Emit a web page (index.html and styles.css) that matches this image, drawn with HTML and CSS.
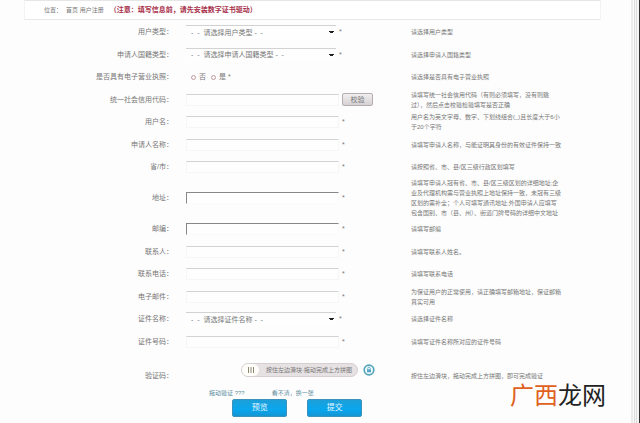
FILE: index.html
```
<!DOCTYPE html>
<html lang="zh-CN">
<head>
  <meta charset="UTF-8">
  <title>用户注册</title>
  <link rel="stylesheet" href="styles.css">
</head>
<body>

  <!-- Breadcrumb -->
  <header class="location">
    <span>位置：</span>
    <nav><a href="#home">首页</a> <a href="#register">用户注册</a></nav>
    <strong>（注意：填写信息前，请先安装数字证书驱动）</strong>
  </header>

  <!-- Registration form -->
  <form id="register">
    <div class="row">
      <label for="userType">用户类型：</label>
      <div class="field">
        <select id="userType"><option>-&nbsp; -&nbsp; 请选择用户类型&nbsp;-&nbsp; -</option></select><i>*</i>
      </div>
      <p>请选择用户类型</p>
    </div>
    <div class="row tall">
      <label for="nationType">申请人国籍类型：</label>
      <div class="field">
        <select id="nationType"><option>-&nbsp; -&nbsp; 请选择申请人国籍类型&nbsp;-&nbsp; -</option></select><i>*</i>
      </div>
      <p>请选择申请人国籍类型</p>
    </div>
    <div class="row">
      <span class="label" id="licenseLabel">是否具有电子营业执照：</span>
      <div class="field radios" role="radiogroup" aria-labelledby="licenseLabel">
        <input type="radio" name="license" id="licenseNo"><label for="licenseNo">否</label>
        <input type="radio" name="license" id="licenseYes"><label for="licenseYes">是</label><i>*</i>
      </div>
      <p>请选择是否具有电子营业执照</p>
    </div>
    <div class="row tall">
      <label for="creditCode">统一社会信用代码：</label>
      <div class="field">
        <input type="text" id="creditCode"><button type="button" class="check">校验</button>
      </div>
      <p>请填写统一社会信用代码（有则必须填写，没有则跳<br>过），然后点击校验检验填写是否正确</p>
    </div>
    <div class="row">
      <label for="userName">用户名：</label>
      <div class="field"><input type="text" id="userName"><i>*</i></div>
      <p>用户名为英文字母、数字、下划线组合(_)且长度大于6小<br>于20个字符</p>
    </div>
    <div class="row tall">
      <label for="applicant">申请人名称：</label>
      <div class="field"><input type="text" id="applicant"><i>*</i></div>
      <p>请填写申请人名称，与能证明其身份的有效证件保持一致</p>
    </div>
    <div class="row">
      <label for="province">省/市：</label>
      <div class="field"><input type="text" id="province"><i>*</i></div>
      <p>请按照省、市、县/区三级行政区划填写</p>
    </div>
    <div class="row">
      <label for="address">地址：</label>
      <div class="field"><input type="text" id="address" class="inset"><i>*</i></div>
      <p>请填写申请人冠有省、市、县/区三级区划的详细地址;企<br>业及代理机构需与营业执照上地址保持一致，未冠有三级<br>区划的需补全；个人可填写通讯地址;外国申请人应填写<br>包含国别、市（县、州）、街道门牌号码的详细中文地址</p>
    </div>
    <div class="row">
      <label for="postcode">邮编：</label>
      <div class="field"><input type="text" id="postcode" class="inset"><i>*</i></div>
      <p>请填写邮编</p>
    </div>
    <div class="row tall">
      <label for="contact">联系人：</label>
      <div class="field"><input type="text" id="contact"><i>*</i></div>
      <p>请填写联系人姓名。</p>
    </div>
    <div class="row">
      <label for="phone">联系电话：</label>
      <div class="field"><input type="text" id="phone"><i>*</i></div>
      <p>请填写联系电话</p>
    </div>
    <div class="row tall">
      <label for="email">电子邮件：</label>
      <div class="field"><input type="text" id="email"><i>*</i></div>
      <p>为保证用户的正常使用，请正确填写邮箱地址，保证邮箱<br>真实可用</p>
    </div>
    <div class="row">
      <label for="certName">证件名称：</label>
      <div class="field">
        <select id="certName"><option>-&nbsp; -&nbsp; 请选择证件名称&nbsp;-&nbsp; -</option></select><i>*</i>
      </div>
      <p>请选择证件名称</p>
    </div>
    <div class="row tall">
      <label for="certNo">证件号码：</label>
      <div class="field"><input type="text" id="certNo"><i>*</i></div>
      <p>请填写证件名称所对应的证件号码</p>
    </div>

    <!-- Slide captcha -->
    <div class="row">
      <span class="label">验证码：</span>
      <div class="captcha">
        <div class="slider">
          <div class="track">
            <button type="button" class="knob" aria-label="滑块">
              <svg width="8" height="8" viewBox="0 0 8 8"><path d="M1.5 1v6M4 1v6M6.5 1v6" stroke="#8a8a70" fill="none"/></svg>
            </button>
            <span>按住左边滑块·拖动完成上方拼图</span>
          </div>
          <svg class="lock" width="12" height="12" viewBox="0 0 12 12">
            <circle cx="6" cy="6" r="4.8" fill="#f2fbfd" stroke="#55a5b8" stroke-width="1.7"/>
            <path d="M4.7 5.5V4.4a1.3 1.3 0 0 1 2.6 0v1.1" fill="none" stroke="#55a5c4" stroke-width=".8"/>
            <rect x="4" y="5.3" width="4" height="3" fill="#55a5c4"/>
          </svg>
        </div>
        <div class="links"><a href="#drag">拖动验证 ???</a><a href="#change">看不清，换一张</a></div>
      </div>
      <p>按住左边滑块，拖动完成上方拼图，即可完成验证</p>
    </div>

    <div class="actions">
      <button type="button">预览</button>
      <button type="submit">提交</button>
    </div>
  </form>

  <div class="site-mark"><span>广西</span>龙网</div>

</body>
</html>
```

FILE: styles.css
```
* {
  box-sizing: border-box;
}
body {
  margin: 0;
  min-height: 100vh;
  padding-right: 12px;
  font: 7px/10px "Liberation Sans", "Noto Sans CJK SC", sans-serif;
  color: #777;
  background: linear-gradient(to right, #fdfdfd 0 3px, #ececec 3px 5px, #fafafa 5px 6px, #dedede 6px 7px, #f5f5f5 7px 8px, #ddd 8px 9px, #f4f4f4 9px 11px, #333 11px) right / 12px 100% no-repeat #fdfdfd;
}
input, select, button {
  font: inherit;
  color: inherit;
}
a {
  color: inherit;
  text-decoration: none;
}
.location {
  display: flex;
  align-items: center;
  height: 20px;
  margin: 0 27px 1px 24px;
  padding-left: 19px;
  font-size: 6px;
  border: 1px solid #f3f3f3;
  border-top-color: #e6e6e6;
  border-bottom-color: #e8e8e8;
  background: #fff;
}
.location nav {
  margin-left: 4px;
}
.location strong {
  margin-left: 6px;
  font-size: 7px;
  color: #a8304a;
}
.row {
  display: grid;
  grid-template-columns: 173fr 238fr 217fr;
  align-items: center;
  min-height: 22px;
}
.row.tall {
  min-height: 23px;
}
.row > label, .label {
  text-align: right;
}
.row p {
  margin: 0;
  font-size: 6px;
  white-space: nowrap;
}
.field {
  display: flex;
  align-items: center;
  padding-left: 13px;
}
.field i {
  margin-left: 3px;
  font-style: normal;
}
input[type="text"] {
  width: 153px;
  height: 12px;
  padding: 0 4px;
  border: 1px solid #f6f6f6;
  border-top-color: #d2d2d2;
  background: #fefefe;
}
input.inset {
  border-color: #888 #fafafa #fafafa #888;
}
select {
  width: 150px;
  height: 14px;
  padding: 0 5px;
  appearance: none;
  border: 0;
  border-top: 1px solid #d2d2d2;
  border-radius: 0;
  background: linear-gradient(#222, #222) right 2px top 5px / 5px 1px no-repeat, linear-gradient(#222, #222) right 3px top 6px / 3px 1px no-repeat, #fefefe;
}
.radios input {
  appearance: none;
  width: 5px;
  height: 5px;
  margin: 0 3px 0 5px;
  border: 1px solid #c09a9f;
  border-radius: 50%;
}
.radios i {
  margin-left: 2px;
}
.check {
  width: 31px;
  height: 13px;
  margin-left: 3px;
  padding: 0;
  border: 1px solid #b5adb1;
  border-radius: 2px;
  background: linear-gradient(#f2eff0, #d6d1d4);
}
.captcha {
  padding: 10px 0 1px 36px;
}
.slider {
  display: flex;
  align-items: center;
  gap: 5px;
  margin-left: 32px;
}
.track {
  display: flex;
  align-items: center;
  width: 117px;
  height: 14px;
  border: 1px solid #d6cfd0;
  border-radius: 7px;
  background: #e6e1e2;
  font-size: 6px;
  white-space: nowrap;
}
.knob {
  display: flex;
  align-items: center;
  justify-content: center;
  width: 17px;
  height: 12px;
  margin-right: 7px;
  padding: 0;
  border: 0;
  border-radius: 7px;
  background: #fffefa;
}
.links {
  display: flex;
  gap: 27px;
  margin-top: 11px;
  font-size: 6px;
  color: #5f8e9f;
}
.actions {
  display: flex;
  gap: 20px;
  padding-left: 37%;
}
.actions button {
  width: 55px;
  height: 18px;
  padding: 0;
  border: 1px solid #3a92bd;
  border-radius: 2px;
  font-size: 8px;
  color: #e4f6ff;
  background: linear-gradient(#1e9fd8, #08a6ee 60%, #1595d2);
}
.site-mark {
  position: absolute;
  right: 34px;
  bottom: 17px;
  font: 24px/24px "Noto Sans CJK SC", sans-serif;
  color: #222;
}
.site-mark span {
  color: #e06020;
}
```
